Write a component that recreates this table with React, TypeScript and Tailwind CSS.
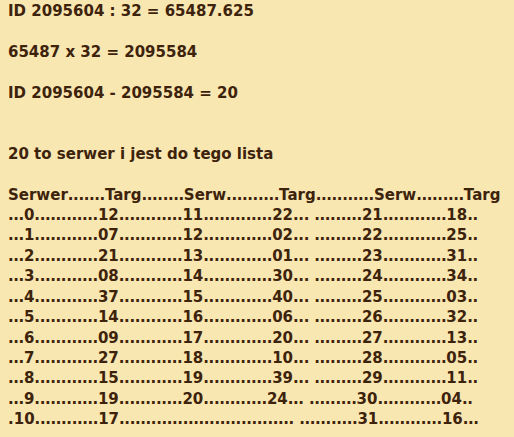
import React from 'react';

const dots = (n: number) => '.'.repeat(n);

const ROWS: [string, string, string, string, string, string][] = [
  ['0', '12', '11', '22', '21', '18'],
  ['1', '07', '12', '02', '22', '25'],
  ['2', '21', '13', '01', '23', '31'],
  ['3', '08', '14', '30', '24', '34'],
  ['4', '37', '15', '40', '25', '03'],
  ['5', '14', '16', '06', '26', '32'],
  ['6', '09', '17', '20', '27', '13'],
  ['7', '27', '18', '10', '28', '05'],
  ['8', '15', '19', '39', '29', '11'],
];

const LINES: string[] = [
  'ID 2095604 : 32 = 65487.625',
  '',
  '65487 x 32 = 2095584',
  '',
  'ID 2095604 - 2095584 = 20',
  '',
  '',
  '20 to serwer i jest do tego lista',
  '',
  'Serwer' + dots(7) + 'Targ' + dots(8) + 'Serw' + dots(10) + 'Targ' + dots(11) + 'Serw' + dots(9) + 'Targ',
  ...ROWS.map(
    ([n, a, b, c, d, e]) =>
      '...' + n + dots(12) + a + dots(12) + b + dots(13) + c + '... ' + dots(9) + d + dots(12) + e + '..'
  ),
  '...9' + dots(12) + '19' + dots(12) + '20' + dots(12) + '24' + '... ' + dots(9) + '30' + dots(12) + '04' + '..',
  '.10' + dots(12) + '17' + dots(33) + ' ' + dots(11) + '31' + dots(12) + '16' + '...',
];

// dots in Verdana are a touch narrower than in DejaVu, so tighten the runs
const Line: React.FC<{ text: string }> = ({ text }) => {
  if (!text) return <div>&nbsp;</div>;
  const parts = text.split(/(\.{2,})/);
  return (
    <div>
      {parts.map((p, i) =>
        /^\.{2,}$/.test(p) ? (
          <span key={i} className="tracking-[-0.4px]">{p}</span>
        ) : (
          <span key={i}>{p}</span>
        )
      )}
    </div>
  );
};

export default function App() {
  return (
    <div className="w-[514px] h-[437px] overflow-hidden bg-[#f9e7b2] text-[#3d230b]">
      <div className="pl-2 pt-px font-['DejaVu_Sans',sans-serif] font-bold text-[15px] leading-[20.4px] whitespace-pre">
        {LINES.map((l, i) => (
          <Line key={i} text={l} />
        ))}
      </div>
    </div>
  );
}
